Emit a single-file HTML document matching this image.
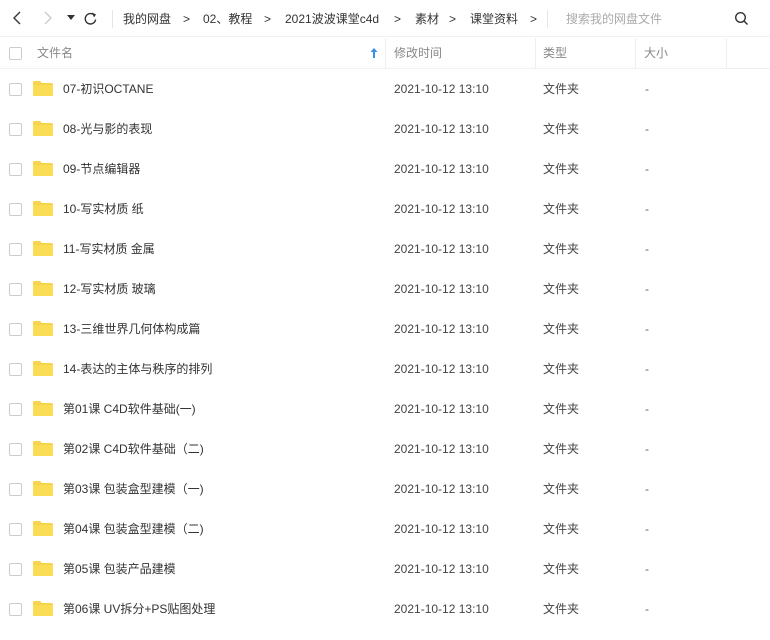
<!DOCTYPE html>
<html><head><meta charset="utf-8"><style>
*{margin:0;padding:0;box-sizing:border-box}
body{width:770px;height:640px;background:#fff;font-family:"Liberation Sans","Noto Sans CJK SC",sans-serif;font-size:12px;color:#333;position:relative;overflow:hidden}
.abs{position:absolute;white-space:nowrap}
.top{position:absolute;left:0;top:0;width:770px;height:37px;border-bottom:1px solid #f0f0f0}
.bc{position:absolute;top:10px;line-height:18px;font-size:12px;color:#333;white-space:nowrap}
.hdr{position:absolute;left:0;top:38px;width:726px;height:31px;background:#fff;border-bottom:1px solid #f2f2f2}
.sep{position:absolute;top:38px;width:1px;height:31px;background:#eee}
.cb{position:absolute;left:9px;width:13px;height:13px;border:1px solid #ccc;border-radius:2px;background:#fff}
.fold{position:absolute;left:33px;width:20px;height:15px}
.row{position:absolute;left:0;width:770px;height:40px}
.row span{position:absolute;top:0;line-height:40px;white-space:nowrap}
</style></head><body>
<div class="top">
<svg class="abs" style="left:10px;top:10px" width="14" height="16"><path d="M10 2 L4 8 L10 14" fill="none" stroke="#333" stroke-width="1.4"/></svg>
<svg class="abs" style="left:41px;top:10px" width="14" height="16"><path d="M4 2 L10 8 L4 14" fill="none" stroke="#ccc" stroke-width="1.4"/></svg>
<svg class="abs" style="left:67px;top:15px" width="8" height="6"><path d="M0 0 L8 0 L4 5Z" fill="#333"/></svg>
<svg class="abs" style="left:83px;top:11px" width="15" height="15"><path d="M11.5 4.5 A5.2 5.2 0 1 0 12.6 8.5" fill="none" stroke="#333" stroke-width="1.4"/><path d="M9 1.5 L13 3.5 L11 6.5Z" fill="#333"/></svg>
<div class="abs" style="left:112px;top:10px;width:1px;height:18px;background:#e5e5e5"></div>
<div class="bc" style="left:123px">我的网盘</div>
<div class="bc" style="left:183px">&gt;</div>
<div class="bc" style="left:203px">02、教程</div>
<div class="bc" style="left:264px">&gt;</div>
<div class="bc" style="left:285px">2021波波课堂c4d</div>
<div class="bc" style="left:394px">&gt;</div>
<div class="bc" style="left:415px">素材</div>
<div class="bc" style="left:449px">&gt;</div>
<div class="bc" style="left:470px">课堂资料</div>
<div class="bc" style="left:530px">&gt;</div>
<div class="abs" style="left:547px;top:10px;width:1px;height:18px;background:#e5e5e5"></div>
<div class="abs" style="left:566px;top:10px;line-height:18px;color:#aaa">搜索我的网盘文件</div>
<svg class="abs" style="left:734px;top:11px" width="15" height="15"><circle cx="6.5" cy="6.5" r="4.8" fill="none" stroke="#333" stroke-width="1.4"/><path d="M10 10 L13.5 13.5" stroke="#333" stroke-width="1.5"/></svg>
</div>
<div class="hdr"></div>
<div class="abs" style="left:726px;top:38px;width:44px;height:31px;border-bottom:1px solid #eee;border-left:1px solid #eee"></div>
<div class="sep" style="left:385px"></div><div class="sep" style="left:535px"></div><div class="sep" style="left:635px"></div>
<div class="cb" style="top:47px"></div>
<div class="abs" style="left:37px;top:38px;line-height:31px;color:#888">文件名</div>
<svg class="abs" style="left:370px;top:47px" width="8" height="12"><path d="M4 1 L7.5 5 L5 5 L5 11 L3 11 L3 5 L0.5 5Z" fill="#3a8ee6"/></svg>
<div class="abs" style="left:394px;top:38px;line-height:31px;color:#888">修改时间</div>
<div class="abs" style="left:543px;top:38px;line-height:31px;color:#888">类型</div>
<div class="abs" style="left:644px;top:38px;line-height:31px;color:#888">大小</div>
<div id="rows"></div>
<script>
var n=["07-初识OCTANE","08-光与影的表现","09-节点编辑器","10-写实材质 纸","11-写实材质 金属","12-写实材质 玻璃","13-三维世界几何体构成篇","14-表达的主体与秩序的排列","第01课 C4D软件基础(一)","第02课 C4D软件基础（二)","第03课 包装盒型建模（一)","第04课 包装盒型建模（二)","第05课 包装产品建模","第06课 UV拆分+PS贴图处理"];
var h="";
n.forEach(function(t,i){var y=69+i*40;
h+='<div class="row" style="top:'+y+'px"><div class="cb" style="top:14px"></div><svg class="fold" style="top:12px" viewBox="0 0 20 15"><path d="M0 1.5Q0 0 1.5 0H7L9 2H18.5Q20 2 20 3.5V13.5Q20 15 18.5 15H1.5Q0 15 0 13.5Z" fill="#f8d44c"/><path d="M0 4H20V13.5Q20 15 18.5 15H1.5Q0 15 0 13.5Z" fill="#fbdc55"/></svg><span style="left:63px;font-size:12px">'+t+'</span><span style="left:394px;color:#444">2021-10-12 13:10</span><span style="left:543px;color:#444">文件夹</span><span style="left:645px;color:#666">-</span></div>';});
document.getElementById("rows").innerHTML=h;
</script>
</body></html>
